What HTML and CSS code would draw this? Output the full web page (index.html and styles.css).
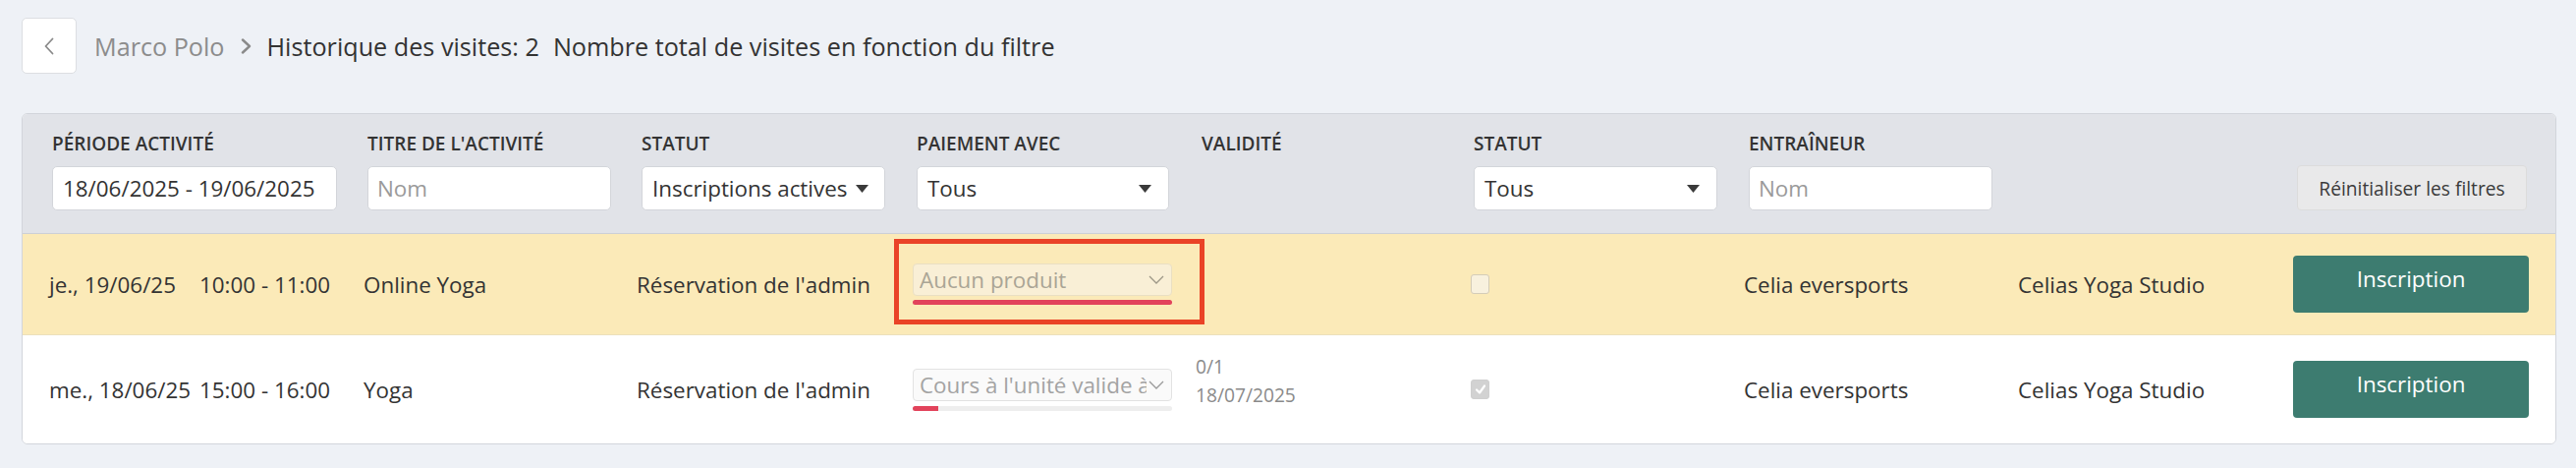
FILE: index.html
```html
<!DOCTYPE html>
<html lang="fr">
<head>
<meta charset="utf-8">
<title>Historique des visites</title>
<link rel="stylesheet" href="styles.css">
</head>
<body>
<div class="page">
  <nav class="crumbs">
    <button class="back" type="button" aria-label="Retour">
      <svg viewBox="0 0 12 18" width="12" height="18"><polyline points="9.5,1.5 2.5,9 9.5,16.5" fill="none" stroke="#8a8a8a" stroke-width="1.8" stroke-linecap="round" stroke-linejoin="round"/></svg>
    </button>
    <span class="crumb-parent">Marco Polo</span>
    <svg class="crumb-sep" viewBox="0 0 13 16" width="13" height="16"><polyline points="3,1.5 10,8 3,14.5" fill="none" stroke="#8a8a8a" stroke-width="2.4" stroke-linecap="round" stroke-linejoin="round"/></svg>
    <span class="crumb-current">Historique des visites: 2</span>
    <span class="crumb-current crumb-note">Nombre total de visites en fonction du filtre</span>
  </nav>

  <section class="panel">
    <div class="filters">
      <div class="filter">
        <span class="filter-label">PÉRIODE ACTIVITÉ</span>
        <div class="field field--date">18/06/2025 - 19/06/2025</div>
      </div>
      <div class="filter">
        <span class="filter-label">TITRE DE L'ACTIVITÉ</span>
        <div class="field field--placeholder">Nom</div>
      </div>
      <div class="filter">
        <span class="filter-label">STATUT</span>
        <div class="field field--select field--tight">
          <span>Inscriptions actives</span>
          <svg class="caret" viewBox="0 0 13 8" width="13" height="8"><polygon points="0,0 13,0 6.5,8" fill="#3a3a3a"/></svg>
        </div>
      </div>
      <div class="filter">
        <span class="filter-label">PAIEMENT AVEC</span>
        <div class="field field--select field--pay">
          <span>Tous</span>
          <svg class="caret" viewBox="0 0 13 8" width="13" height="8"><polygon points="0,0 13,0 6.5,8" fill="#3a3a3a"/></svg>
        </div>
      </div>
      <div class="filter">
        <span class="filter-label">VALIDITÉ</span>
      </div>
      <div class="filter">
        <span class="filter-label">STATUT</span>
        <div class="field field--select">
          <span>Tous</span>
          <svg class="caret" viewBox="0 0 13 8" width="13" height="8"><polygon points="0,0 13,0 6.5,8" fill="#3a3a3a"/></svg>
        </div>
      </div>
      <div class="filter">
        <span class="filter-label">ENTRAÎNEUR</span>
        <div class="field field--placeholder">Nom</div>
      </div>
      <button class="reset" type="button">Réinitialiser les filtres</button>
    </div>

    <div class="row row--highlight">
      <div class="when"><span>je., 19/06/25</span><span>10:00 - 11:00</span></div>
      <div>Online Yoga</div>
      <div>Réservation de l'admin</div>
      <div class="product">
        <div class="product-select product-select--warm">
          <span class="product-text">Aucun produit</span>
          <svg class="chev" viewBox="0 0 16 9" width="16" height="9"><polyline points="1,1 8,8 15,1" fill="none" stroke="#9d9787" stroke-width="1.3"/></svg>
        </div>
        <div class="product-bar product-bar--full"></div>
        <div class="annot"></div>
      </div>
      <div></div>
      <div><span class="check"></span></div>
      <div>Celia eversports</div>
      <div>Celias Yoga Studio</div>
      <button class="enroll" type="button">Inscription</button>
    </div>

    <div class="row row--progress">
      <div class="when"><span>me., 18/06/25</span><span>15:00 - 16:00</span></div>
      <div>Yoga</div>
      <div>Réservation de l'admin</div>
      <div class="product">
        <div class="product-select">
          <span class="product-text">Cours à l'unité valide à</span>
          <svg class="chev" viewBox="0 0 16 9" width="16" height="9"><polyline points="1,1 8,8 15,1" fill="none" stroke="#9a9a9a" stroke-width="1.3"/></svg>
        </div>
        <div class="product-bar"><div class="product-fill" style="width: 26px"></div></div>
      </div>
      <div class="validity"><div>0/1</div><div>18/07/2025</div></div>
      <div><span class="check check--on"><svg viewBox="0 0 12 12" width="12" height="12"><polyline points="2,6.5 5,9.5 10,2.5" fill="none" stroke="#fff" stroke-width="2.2" stroke-linecap="round" stroke-linejoin="round"/></svg></span></div>
      <div>Celia eversports</div>
      <div>Celias Yoga Studio</div>
      <button class="enroll" type="button">Inscription</button>
    </div>
  </section>
</div>
</body>
</html>
```

FILE: styles.css
```css
* { box-sizing: border-box; }

body {
  margin: 0;
  background: #eef1f6;
  font-family: "Open Sans", "Liberation Sans", sans-serif;
  color: #333;
}

.page {
  padding: 18px 20px 24px 22px;
}

/* breadcrumb */
.crumbs {
  display: flex;
  align-items: center;
  height: 57px;
  font-size: 25.2px;
  white-space: nowrap;
}

.back {
  width: 56px;
  height: 57px;
  padding: 0;
  margin-right: 18px;
  background: #fff;
  border: 1px solid #dcdee2;
  border-radius: 5px;
  display: flex;
  align-items: center;
  justify-content: center;
}

.crumb-parent { color: #8c8c8c; }

.crumb-sep {
  margin: 0 15px 0 15px;
  flex: none;
}

.crumb-current { color: #333; }

.crumb-note { margin-left: 14px; }

/* panel */
.panel {
  margin-top: 40px;
  background: #fff;
  border: 1px solid #d2d5db;
  border-radius: 6px;
  overflow: hidden;
}

.filters {
  display: grid;
  grid-template-columns: 321px 279px 280px 290px 277px 280px 558px 234px;
  padding: 18px 0 23px 30px;
  background: #e1e3e8;
  border-bottom: 1px solid #cdd0d6;
}

.filter {
  display: flex;
  flex-direction: column;
}

.filter-label {
  font-size: 19px;
  font-weight: 600;
  line-height: 24px;
  margin-bottom: 11px;
  color: #333;
  white-space: nowrap;
}

.field {
  width: 248px;
  height: 45px;
  padding: 0 10px;
  background: #fff;
  border: 1px solid #d3d5da;
  border-radius: 5px;
  display: flex;
  align-items: center;
  font-size: 22.4px;
  color: #333;
  white-space: nowrap;
}

.field--date { width: 290px; }
.field--pay { width: 257px; }
.field--placeholder { color: #9a9a9a; padding-left: 9px; }

.field--select {
  justify-content: space-between;
  padding-right: 17px;
}

.field--tight {
  justify-content: flex-start;
  padding-right: 10px;
}

.field--tight .caret { margin-left: 9px; }

.caret { flex: none; }

.reset {
  align-self: end;
  width: 234px;
  height: 46px;
  background: #e9e9ea;
  border: 1px solid #dcdcdc;
  border-radius: 4px;
  font-family: "Open Sans", "Liberation Sans", sans-serif;
  font-size: 19.2px;
  color: #3a3a3a;
  padding: 0;
}

/* data rows */
.row {
  display: grid;
  grid-template-columns: 320px 278px 281px 288px 280px 278px 279px 280px 240px;
  align-items: center;
  padding: 22px 0 22px 27px;
  font-size: 22.4px;
  color: #333;
  white-space: nowrap;
}

.row--highlight {
  background: #fbeab8;
  border-bottom: 1px solid #ece0bc;
}

.row--progress {
  padding: 26px 0 26px 27px;
  background: #fff;
}

.when {
  display: flex;
  justify-content: space-between;
  width: 286px;
}

.product {
  position: relative;
  width: 264px;
}

.product-select {
  height: 33px;
  padding: 0 7px 0 6px;
  display: flex;
  align-items: center;
  gap: 2px;
  background: #fafafa;
  border: 1px solid #e2e2e2;
  border-radius: 4px;
  color: #a3a3a3;
  font-size: 22.4px;
  overflow: hidden;
}

.product-select--warm {
  background: #f9efd6;
  border-color: #eadfc3;
  color: #aaa595;
}

.product-text {
  flex: 1;
  min-width: 0;
  overflow: hidden;
  white-space: nowrap;
}

.chev { flex: none; }

.product-bar {
  height: 5px;
  margin-top: 5px;
  background: #eeeeee;
  border-radius: 3px;
  overflow: hidden;
}

.product-bar--full {
  margin-top: 4px;
  background: #e2435b;
}

.product-fill {
  height: 100%;
  background: #e2435b;
}

.annot {
  position: absolute;
  left: -19px;
  right: -33px;
  top: -25px;
  bottom: -20px;
  border: 5px solid #ea4327;
  pointer-events: none;
}

.validity {
  font-size: 19.2px;
  line-height: 29px;
  color: #8a8a8a;
  margin: -9px 0 9px;
}

.check {
  display: flex;
  align-items: center;
  justify-content: center;
  width: 19px;
  height: 20px;
  background: #f8f1de;
  border: 1px solid #d4ccb8;
  border-radius: 3px;
}

.check--on {
  background: #d2d2d2;
  border-color: #cfcfcf;
}

.enroll {
  width: 240px;
  height: 58px;
  padding: 0 0 12px;
  background: #3d7c70;
  border: none;
  border-radius: 4px;
  color: #fff;
  font-family: "Open Sans", "Liberation Sans", sans-serif;
  font-size: 22.4px;
}
```
